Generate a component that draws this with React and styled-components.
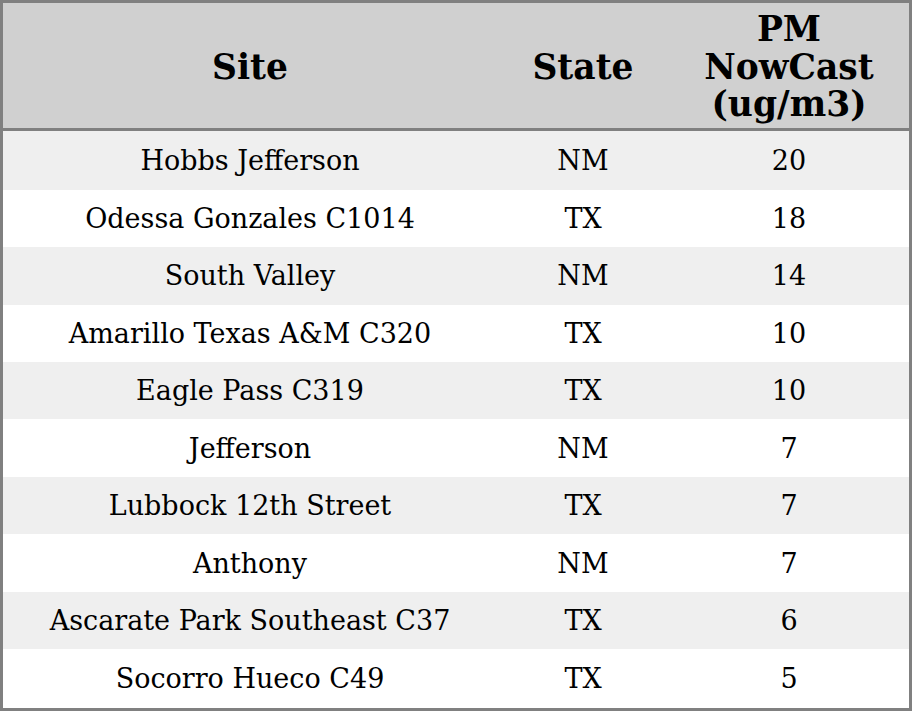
import React from 'react';
import styled, { createGlobalStyle } from 'styled-components';

const Global = createGlobalStyle`
  html, body {
    margin: 0;
    padding: 0;
    background: #ffffff;
  }
`;

const rows = [
  ['Hobbs Jefferson', 'NM', 20],
  ['Odessa Gonzales C1014', 'TX', 18],
  ['South Valley', 'NM', 14],
  ['Amarillo Texas A&M C320', 'TX', 10],
  ['Eagle Pass C319', 'TX', 10],
  ['Jefferson', 'NM', 7],
  ['Lubbock 12th Street', 'TX', 7],
  ['Anthony', 'NM', 7],
  ['Ascarate Park Southeast C37', 'TX', 6],
  ['Socorro Hueco C49', 'TX', 5],
];

const Table = styled.table`
  width: 912px;
  height: 711px;
  box-sizing: border-box;
  border-collapse: collapse;
  border: 3px solid #808080;
  font-family: "DejaVu Serif", serif;
  color: #000;
`;

const HeadRow = styled.tr`
  background: #d0d0d0;
  border-bottom: 3px solid #808080;
  height: 128px;
`;

const Th = styled.th`
  font-size: 34.5px;
  font-weight: bold;
  line-height: 37.5px;
  text-align: center;
  padding: 4px 0 0;
  width: ${p => p.$w}px;
`;

const Row = styled.tr`
  background: ${p => (p.$odd ? '#efefef' : '#ffffff')};
`;

const Td = styled.td`
  font-size: 27px;
  text-align: center;
  padding: 0;
`;

export default function App() {
  return (
    <>
      <Global />
      <Table>
        <thead>
          <HeadRow>
            <Th $w={494}>Site</Th>
            <Th $w={172}>State</Th>
            <Th $w={240}>PM<br />NowCast<br />(ug/m3)</Th>
          </HeadRow>
        </thead>
        <tbody>
          {rows.map((r, i) => (
            <Row key={i} $odd={i % 2 === 0}>
              <Td>{r[0]}</Td>
              <Td>{r[1]}</Td>
              <Td>{r[2]}</Td>
            </Row>
          ))}
        </tbody>
      </Table>
    </>
  );
}
